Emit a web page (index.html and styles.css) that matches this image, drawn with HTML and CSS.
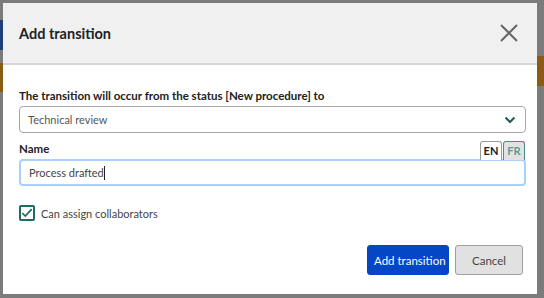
FILE: index.html
```html
<!DOCTYPE html>
<html lang="en">
<head>
    <meta charset="UTF-8">
    <title>Add transition</title>
    <link rel="stylesheet" href="styles.css">
</head>
<body>
    <div class="backdrop">
        <div class="modal">
            <div class="modal-header">
                <h2>Add transition</h2>
                <button class="close" aria-label="Close">
                    <svg width="18" height="18" viewBox="0 0 18 18"><path d="M1 1L17 17M17 1L1 17" stroke="#666" stroke-width="2"/></svg>
                </button>
            </div>

            <div class="modal-body">
                <label class="field-label">The transition will occur from the status [New procedure] to</label>
                <div class="select">
                    <span>Technical review</span>
                    <svg width="12" height="8" viewBox="0 0 12 8"><path d="M1.5 1.5L6 6L10.5 1.5" fill="none" stroke="#1d5c57" stroke-width="2"/></svg>
                </div>

                <div class="name-row">
                    <label class="field-label">Name</label>
                    <div class="lang-tabs">
                        <span class="tab active">EN</span>
                        <span class="tab">FR</span>
                    </div>
                </div>
                <div class="input">Process drafted<span class="caret"></span></div>

                <label class="check">
                    <span class="box">
                        <svg width="14" height="12" viewBox="0 0 14 12"><path d="M1.5 6L5 9.5L12.5 1.5" fill="none" stroke="#1d6b62" stroke-width="2"/></svg>
                    </span>
                    Can assign collaborators
                </label>
            </div>

            <div class="modal-footer">
                <button class="btn primary">Add transition</button>
                <button class="btn">Cancel</button>
            </div>
        </div>
    </div>
</body>
</html>
```

FILE: styles.css
```css
* { margin: 0; padding: 0; box-sizing: border-box; }

body {
    font-family: Lato, 'Open Sans', sans-serif;
    color: #222;
    width: 544px;
    height: 298px;
    overflow: hidden;
}

.backdrop {
    height: 298px;
    padding: 3px 7px 4px 3px;
    background:
        linear-gradient(#7b7b7b 0, #7b7b7b 20px, #1f3f78 20px, #1f3f78 50px, #7b7b7b 50px, #7b7b7b 63px, #8a5b14 63px, #8a5b14 92px, #7b7b7b 92px) left top / 3px 100% no-repeat,
        linear-gradient(#7b7b7b 0, #7b7b7b 56px, #8a5b14 56px, #8a5b14 86px, #7b7b7b 86px) right top / 7px 100% no-repeat,
        #7b7b7b;
}

.modal {
    height: 100%;
    background: #fff;
    display: flex;
    flex-direction: column;
}

.modal-header {
    height: 62px;
    background: #f0f0f0;
    border-bottom: 2px solid #d6d6d6;
    display: flex;
    align-items: center;
    justify-content: space-between;
    padding: 0 19px 0 16px;
}

.modal-header h2 {
    font-size: 14.5px;
    font-weight: bold;
    color: #222;
}

.close {
    border: none;
    background: none;
    display: flex;
}

.modal-body {
    padding: 24px 11px 0 16px;
}

.field-label {
    display: block;
    font-size: 11.5px;
    font-weight: bold;
    color: #222;
    margin-bottom: 4px;
}

.select {
    height: 27px;
    border: 1px solid #a8a8a8;
    border-radius: 4px;
    display: flex;
    align-items: center;
    justify-content: space-between;
    padding: 0 9px 0 8px;
    font-size: 11px;
    color: #555;
}

.name-row {
    display: flex;
    justify-content: space-between;
    align-items: flex-end;
    margin-top: 8px;
}

.name-row .field-label {
    margin-bottom: 4px;
}

.lang-tabs {
    display: flex;
    gap: 1px;
    margin-right: 1px;
    margin-bottom: -1px;
}

.tab {
    font-size: 11px;
    font-weight: bold;
    padding-top: 2px;
    width: 22px;
    height: 19px;
    text-align: center;
    border: 1px solid #4b8c84;
    border-bottom: none;
    border-radius: 3px 3px 0 0;
    background: #e2e2e2;
    color: #5a9a92;
}

.tab.active {
    background: #fff;
    color: #222;
    border-color: #9a9a9a;
}

.input {
    height: 27px;
    border: 2px solid #a8d0f8;
    border-radius: 4px;
    display: flex;
    align-items: center;
    padding-left: 8px;
    font-size: 11px;
    color: #444;
}

.caret {
    display: inline-block;
    width: 1px;
    height: 14px;
    background: #222;
}

.check {
    display: flex;
    align-items: center;
    gap: 6px;
    margin-top: 19px;
    font-size: 11px;
    color: #444;
}

.box {
    width: 16px;
    height: 16px;
    border: 2px solid #1d6b62;
    border-radius: 2px;
    display: flex;
    align-items: center;
    justify-content: center;
}

.modal-footer {
    margin-top: auto;
    display: flex;
    justify-content: flex-end;
    gap: 6px;
    padding: 0 14px 19px 0;
}

.btn {
    height: 30px;
    padding: 0 6px;
    font-family: inherit;
    font-size: 11.5px;
    white-space: nowrap;
    border: 1px solid #a0a0a0;
    border-radius: 3px;
    background: #e1e1e1;
    color: #444;
    width: 68px;
}

.btn.primary {
    background: #0546c6;
    border-color: #0546c6;
    color: #fff;
    width: 82px;
}
```
